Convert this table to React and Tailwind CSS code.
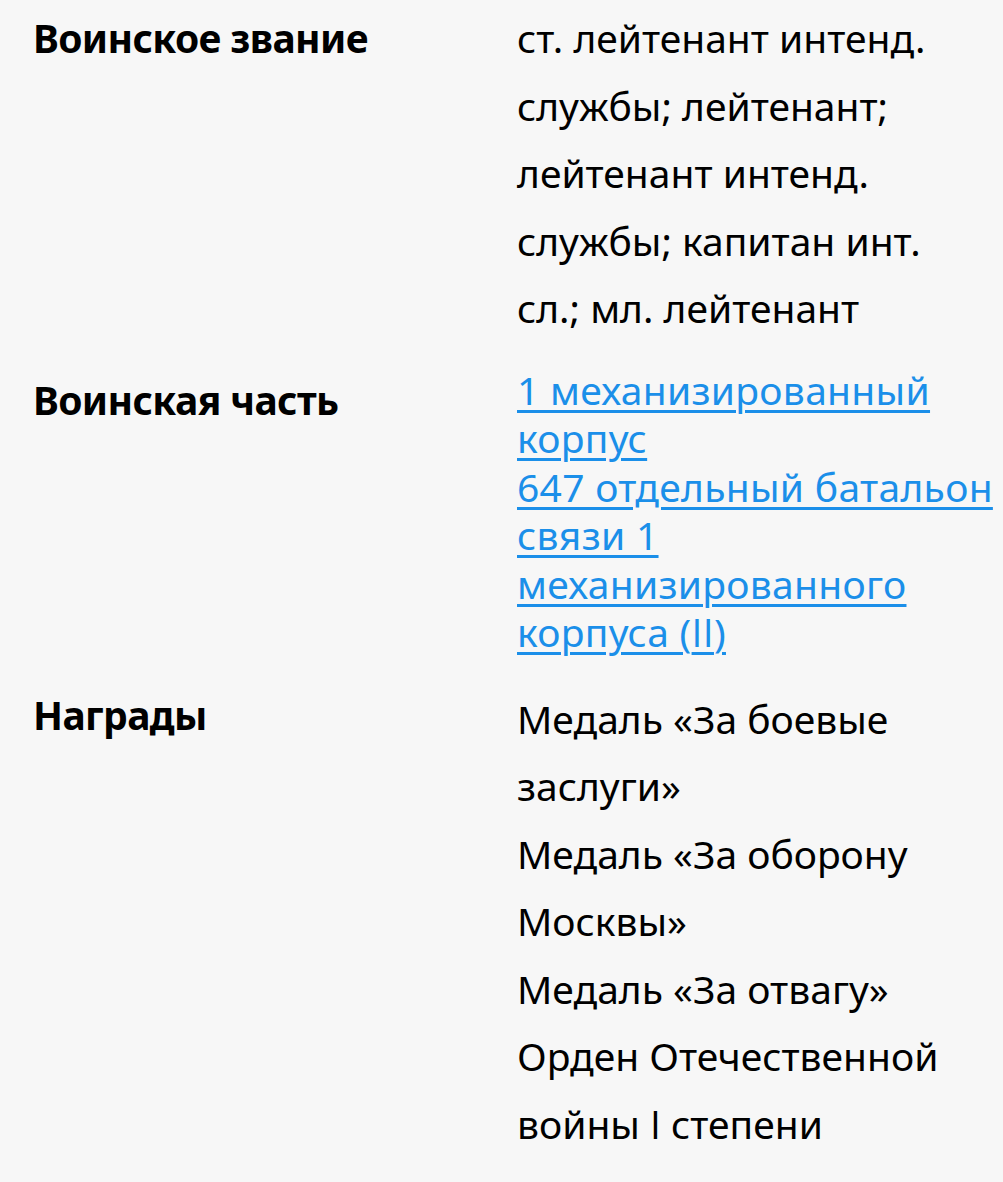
import React from 'react';

const ranks = 'ст. лейтенант интенд. службы; лейтенант; лейтенант интенд. службы; капитан инт. сл.; мл. лейтенант';

// plain-stem I, Noto's capital I has serifs
const I = ({ n = 1 }) => <span className="font-['Open_Sans',sans-serif]">{'I'.repeat(n)}</span>;

const units = [
  { key: 'k1', text: '1 механизированный корпус' },
  { key: 'k2', text: <>647 отдельный батальон связи 1 механизированного корпуса (<I n={2} />)</> },
];

const awards = [
  { key: 'a1', text: 'Медаль «За боевые заслуги»' },
  { key: 'a2', text: 'Медаль «За оборону Москвы»' },
  { key: 'a3', text: 'Медаль «За отвагу»' },
  { key: 'a4', text: <>Орден Отечественной войны <I /> степени</> },
];

const Label = ({ children }) => (
  <div className="font-bold text-black leading-[67px] tracking-[-0.6px]">{children}</div>
);

export default function App() {
  return (
    <div className="min-h-[1182px] bg-[#f7f7f7] pl-[33px] pr-0 pt-[4px] text-[39px] text-black font-['Noto_Sans',sans-serif]">
      <div className="grid grid-cols-[484px_1fr] gap-y-[24px]">
        <Label>Воинское звание</Label>
        <div className="leading-[67.5px] pr-[24px]">{ranks}</div>

        <Label>Воинская часть</Label>
        <div className="leading-[48.5px] flex flex-col tracking-[0.3px]">
          {units.map((u) => (
            <a
              key={u.key}
              href="#"
              className="text-[#1b8fe9] underline decoration-[3px] underline-offset-[5px]"
            >
              {u.text}
            </a>
          ))}
        </div>

        <Label>Награды</Label>
        <div className="leading-[67.5px] flex flex-col pt-[4px]">
          {awards.map((a) => (
            <div key={a.key}>{a.text}</div>
          ))}
        </div>
      </div>
    </div>
  );
}
